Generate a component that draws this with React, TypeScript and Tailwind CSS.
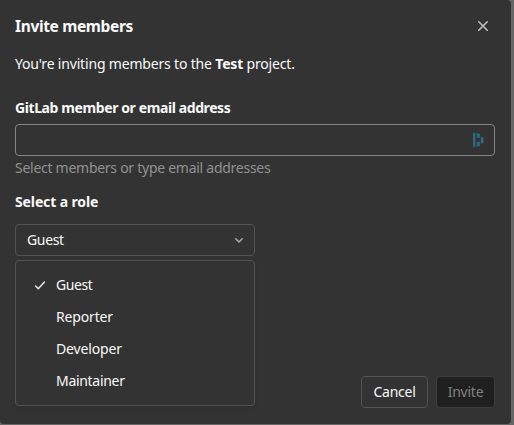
const roles = [
  { name: "Guest", tracking: "tracking-[-0.4px]" },
  { name: "Reporter", tracking: "tracking-[-0.15px]" },
  { name: "Developer", tracking: "tracking-[-0.15px]" },
  { name: "Maintainer", tracking: "tracking-[-0.3px]" },
];

function CloseIcon() {
  return (
    <svg width="16" height="16" viewBox="0 0 16 16" fill="none" stroke="#bfbfbf" strokeWidth="1.6" strokeLinecap="round">
      <path d="M3.75 3.75l8.5 8.5M12.25 3.75l-8.5 8.5" />
    </svg>
  );
}

function CheckIcon() {
  return (
    <svg width="16" height="16" viewBox="0 0 16 16" fill="none" stroke="#e6e6e6" strokeWidth="1.5" strokeLinecap="round" strokeLinejoin="round">
      <path d="M3.6 9l2.7 2.8L12.4 5" />
    </svg>
  );
}

function ChevronIcon() {
  return (
    <svg width="16" height="16" viewBox="0 0 16 16" fill="none" stroke="#a8a8a8" strokeWidth="1.6" strokeLinecap="round" strokeLinejoin="round">
      <path d="M4.75 6.75L8 10l3.25-3.25" />
    </svg>
  );
}

function PasswordManagerIcon() {
  return (
    <svg width="12" height="16" viewBox="0 0 12 16" fill="#2b6a80">
      <path d="M1 .5l2.4.5v13.8l-2.4.6zM4.8 1l3 .8v4.4l-3-.8zM4.8 10.2l3-.7v4.4l-3 .8zM8.8 4.7l2.7.8v5.5l-2.7.8z" />
    </svg>
  );
}

export default function App() {
  return (
    <div className="h-[425px] w-[514px] overflow-hidden bg-[#666] font-['Noto_Sans',sans-serif] text-sm leading-5 text-[#fafafa]">
      <section className="flex h-[424px] w-[511px] flex-col rounded-r rounded-bl bg-[#333] pl-[15px] pr-4">
        <header className="flex h-[54px] shrink-0 items-center justify-between pb-[2px] pr-1">
          <h2 className="whitespace-nowrap text-[15.5px] font-bold leading-5 tracking-[-0.35px]">Invite members</h2>
          <button aria-label="Close"><CloseIcon /></button>
        </header>
        <p className="whitespace-nowrap tracking-[-0.18px]">
          You're inviting members to the <strong>Test</strong> project.
        </p>
        <label className="mt-6 whitespace-nowrap font-bold tracking-[-0.4px]">GitLab member or email address</label>
        <div className="mt-[6px] flex h-8 shrink-0 items-center justify-end rounded border border-[#868686] pr-[10px]">
          <PasswordManagerIcon />
        </div>
        <p className="mt-[2px] whitespace-nowrap text-[#919191] tracking-[-0.27px]">Select members or type email addresses</p>
        <label className="mt-[14px] whitespace-nowrap font-bold tracking-[-0.12px]">Select a role</label>
        <button className="mt-3 flex h-8 w-60 shrink-0 items-center justify-between rounded border border-[#535353] pl-[11px] pr-[7px]">
          <span className="tracking-[-0.35px]">Guest</span>
          <ChevronIcon />
        </button>
        <div className="mt-1 flex items-end justify-between">
          <ul className="h-[146px] w-60 rounded border border-[#535353] py-2 shadow-[0_2px_4px_rgba(0,0,0,0.1)]">
            {roles.map((role, i) => (
              <li key={role.name} className="flex h-8 items-center gap-2 pl-4">
                <span className="w-4">{i === 0 && <CheckIcon />}</span>
                <span className={role.tracking}>{role.name}</span>
              </li>
            ))}
          </ul>
          <div className="mb-[-2px] flex gap-2">
            <button className="h-8 w-[67px] rounded border border-[#535353] tracking-[-0.25px]">Cancel</button>
            <button className="h-8 w-[59px] rounded border border-[#3d3d3d] bg-[#1f1f1f] text-[#828282] tracking-[-0.25px]">Invite</button>
          </div>
        </div>
      </section>
    </div>
  );
}
